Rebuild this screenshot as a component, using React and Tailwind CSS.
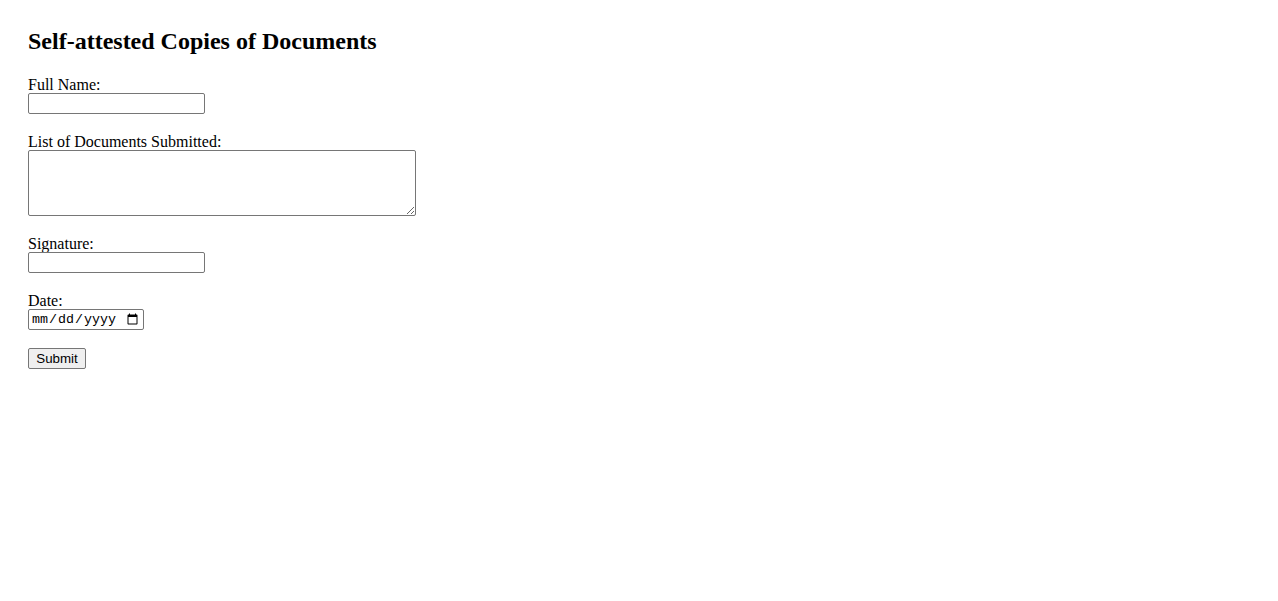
export default function App() {
  return (
    <div className="min-h-[601px] bg-white text-black pl-[28px] font-['Liberation_Serif',serif]">
      <h2 className="pt-[27px] h-[55px] text-[24px] leading-[28px] font-bold">
        Self-attested Copies of Documents
      </h2>
      <form className="flex flex-col items-start" onSubmit={(e) => e.preventDefault()}>
        <label className="mt-[19px] h-[19px] text-[16px] leading-[22px]">Full Name:</label>
        <input
          type="text"
          className="w-[177px] h-[21px] border border-[#767676] rounded-[2px] px-[2px] py-[1px] text-[13.33px] font-['Liberation_Sans',sans-serif] bg-white"
        />
        <label className="mt-[17px] h-[19px] text-[16px] leading-[22px]">List of Documents Submitted:</label>
        <textarea
          className="w-[388px] h-[66px] border border-[#767676] rounded-[2px] px-[2px] py-[2px] text-[13.33px] font-['Liberation_Mono',monospace] bg-white resize"
        />
        <label className="mt-[17px] h-[19px] text-[16px] leading-[22px]">Signature:</label>
        <input
          type="text"
          className="w-[177px] h-[21px] border border-[#767676] rounded-[2px] px-[2px] py-[1px] text-[13.33px] font-['Liberation_Sans',sans-serif] bg-white"
        />
        <label className="mt-[17px] h-[19px] text-[16px] leading-[22px]">Date:</label>
        <input
          type="date"
          className="w-[116px] h-[21px] border border-[#767676] rounded-[2px] pl-[2px] pr-[2px] py-[1px] text-[13.33px] font-['Liberation_Mono',monospace] bg-white"
        />
        <button
          type="submit"
          className="mt-[18px] w-[58px] h-[21px] border border-[#767676] rounded-[2px] bg-[#efefef] text-[13.33px] leading-[15px] font-['Liberation_Sans',sans-serif] px-[6px]"
        >
          Submit
        </button>
      </form>
    </div>
  );
}
